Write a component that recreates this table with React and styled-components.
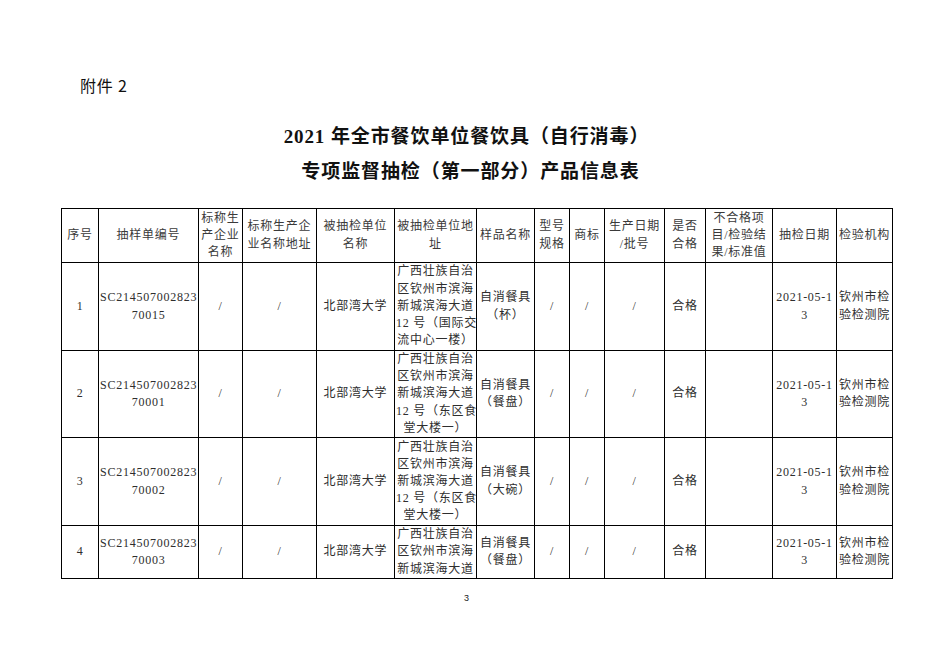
import React from "react";
import styled, { createGlobalStyle } from "styled-components";

const GlobalStyle = createGlobalStyle`
  html, body { margin: 0; padding: 0; background: #ffffff; }
  body { font-family: "Liberation Serif", "Noto Sans CJK SC", serif; color: #1a1a1a; }
`;

const Page = styled.div`
  width: 933px;
  height: 659px;
  box-sizing: border-box;
  padding-top: 75px;
  display: flex;
  flex-direction: column;
  background: #fff;
`;

const Attachment = styled.div`
  margin-left: 80px;
  font-family: "Noto Sans CJK SC", sans-serif;
  font-size: 16px;
  line-height: 20px;
  height: 20px;
  color: #111;
  letter-spacing: 0.8px;
`;

const Title = styled.h1`
  margin: 24px 0 0 0;
  text-align: center;
  font-family: "Liberation Serif", "Noto Sans CJK SC", serif;
  font-weight: 700;
  font-size: 19px;
  line-height: 35px;
  letter-spacing: 0.9px;
  color: #111;
`;

const TitleLine = styled.span`
  display: block;
  padding-left: ${(p) => p.$shift || 0}px;
`;

const Table = styled.table`
  margin: 19px 0 0 61px;
  width: 831px;
  table-layout: fixed;
  border-collapse: collapse;
`;

const Row = styled.tr`
  height: ${(p) => p.$h}px;
`;

const Cell = styled.td`
  border: 1px solid #000;
  padding: 0 1px;
  text-align: center;
  vertical-align: middle;
  font-size: 12px;
  line-height: 17.2px;
  letter-spacing: 0.75px;
  color: #2e2e2e;
  overflow: hidden;
`;

const HeadCell = styled(Cell).attrs({ as: "th" })`
  font-weight: 400;
  color: #3a3a3a;
`;

const Line = styled.span`
  display: block;
  white-space: nowrap;
`;

const PageNumber = styled.div`
  margin-top: 13px;
  text-align: center;
  font-family: "Liberation Sans", sans-serif;
  font-size: 9px;
  line-height: 12px;
  color: #222;
`;

const widths = [37, 100, 44, 74, 78, 82, 58, 35, 35, 60, 41, 67, 64, 56];

const headers = [
  ["序号"],
  ["抽样单编号"],
  ["标称生", "产企业", "名称"],
  ["标称生产企", "业名称地址"],
  ["被抽检单位", "名称"],
  ["被抽检单位地", "址"],
  ["样品名称"],
  ["型号", "规格"],
  ["商标"],
  ["生产日期", "/批号"],
  ["是否", "合格"],
  ["不合格项", "目/检验结", "果/标准值"],
  ["抽检日期"],
  ["检验机构"],
];

const addrFull = (tail1, tail2) => [
  "广西壮族自治",
  "区钦州市滨海",
  "新城滨海大道",
  tail1,
  tail2,
];

const rows = [
  {
    h: 88,
    seq: "1",
    code: "70015",
    addr: addrFull("12 号（国际交", "流中心一楼）"),
    sample: "（杯）",
  },
  {
    h: 87,
    seq: "2",
    code: "70001",
    addr: addrFull("12 号（东区食", "堂大楼一）"),
    sample: "（餐盘）",
  },
  {
    h: 88,
    seq: "3",
    code: "70002",
    addr: addrFull("12 号（东区食", "堂大楼一）"),
    sample: "（大碗）",
  },
  {
    h: 53,
    seq: "4",
    code: "70003",
    addr: ["广西壮族自治", "区钦州市滨海", "新城滨海大道"],
    sample: "（餐盘）",
  },
];

const Lines = ({ items }) => (
  <>
    {items.map((t, i) => (
      <Line key={i}>{t}</Line>
    ))}
  </>
);

export default function App() {
  return (
    <>
      <GlobalStyle />
      <Page>
        <Attachment>附件 2</Attachment>
        <Title>
          <TitleLine>2021 年全市餐饮单位餐饮具（自行消毒）</TitleLine>
          <TitleLine $shift={8}>专项监督抽检（第一部分）产品信息表</TitleLine>
        </Title>
        <Table>
          <colgroup>
            {widths.map((w, i) => (
              <col key={i} style={{ width: w }} />
            ))}
          </colgroup>
          <thead>
            <Row $h={54}>
              {headers.map((h, i) => (
                <HeadCell key={i}>
                  <Lines items={h} />
                </HeadCell>
              ))}
            </Row>
          </thead>
          <tbody>
            {rows.map((r) => (
              <Row key={r.seq} $h={r.h}>
                <Cell>{r.seq}</Cell>
                <Cell>
                  <Lines items={["SC214507002823", r.code]} />
                </Cell>
                <Cell>/</Cell>
                <Cell>/</Cell>
                <Cell>北部湾大学</Cell>
                <Cell>
                  <Lines items={r.addr} />
                </Cell>
                <Cell>
                  <Lines items={["自消餐具", r.sample]} />
                </Cell>
                <Cell>/</Cell>
                <Cell>/</Cell>
                <Cell>/</Cell>
                <Cell>合格</Cell>
                <Cell></Cell>
                <Cell>
                  <Lines items={["2021-05-1", "3"]} />
                </Cell>
                <Cell>
                  <Lines items={["钦州市检", "验检测院"]} />
                </Cell>
              </Row>
            ))}
          </tbody>
        </Table>
        <PageNumber>3</PageNumber>
      </Page>
    </>
  );
}
